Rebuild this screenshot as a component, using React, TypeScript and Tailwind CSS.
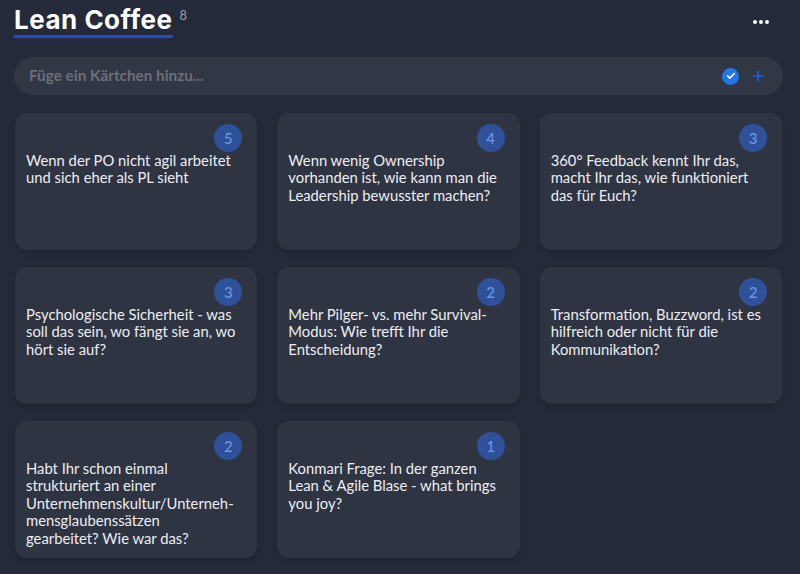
import { Check, Plus } from 'lucide-react'

interface CardItem {
  votes: number
  text: string
}

// line breaks are kept as in the picture
const cards: CardItem[] = [
  { votes: 5, text: 'Wenn der PO nicht agil arbeitet\nund sich eher als PL sieht' },
  { votes: 4, text: 'Wenn wenig Ownership\nvorhanden ist, wie kann man die\nLeadership bewusster machen?' },
  { votes: 3, text: '360° Feedback kennt Ihr das,\nmacht Ihr das, wie funktioniert\ndas für Euch?' },
  { votes: 3, text: 'Psychologische Sicherheit - was\nsoll das sein, wo fängt sie an, wo\nhört sie auf?' },
  { votes: 2, text: 'Mehr Pilger- vs. mehr Survival-\nModus: Wie trefft Ihr die\nEntscheidung?' },
  { votes: 2, text: 'Transformation, Buzzword, ist es\nhilfreich oder nicht für die\nKommunikation?' },
  {
    votes: 2,
    text: 'Habt Ihr schon einmal\nstrukturiert an einer\nUnternehmenskultur/Unterneh-\nmensglaubenssätzen\ngearbeitet? Wie war das?',
  },
  { votes: 1, text: 'Konmari Frage: In der ganzen\nLean & Agile Blase - what brings\nyou joy?' },
]

function Card({ votes, text }: CardItem) {
  return (
    <div className="flex h-[137px] flex-col rounded-xl bg-[#2f3442] pt-[11px] pr-[15px] pl-[11px] shadow-md shadow-black/10">
      <div className="flex justify-end">
        <span className="grid size-[28px] place-items-center rounded-full bg-[#2f5199] text-[15px] font-medium text-[#6b96e8]">
          {votes}
        </span>
      </div>
      <p className="text-[14.8px] leading-[17.4px] whitespace-pre-line text-[#eceef1]">{text}</p>
    </div>
  )
}

export default function App() {
  return (
    <div className="h-[574px] w-[800px] overflow-hidden bg-[#252a3a] pr-[18px] pl-[15px] font-['Lato',sans-serif]">
      <header className="flex h-[57px] items-start justify-between">
        <div className="-ml-px flex items-start">
          <h1 className="mt-[5px] border-b-[3px] border-[#1d4fc0] font-['Inter',sans-serif] text-[26px] leading-[30px] font-bold tracking-[0.5px] text-white">
            Lean Coffee
          </h1>
          <span className="mt-[7px] ml-[7px] text-[13px] leading-4 text-[#9a9ea8]">8</span>
        </div>
        <div className="mt-[20px] mr-[13px] flex gap-[2px]">
          <span className="size-[4px] rounded-full bg-white" />
          <span className="size-[4px] rounded-full bg-white" />
          <span className="size-[4px] rounded-full bg-white" />
        </div>
      </header>

      <div className="-mr-px -ml-px flex h-[38px] items-center rounded-full bg-[#323745] pr-[17px] pl-[15px]">
        <span className="-mt-[2px] flex-1 text-[15.3px] font-bold text-[#6b6f7a]">Füge ein Kärtchen hinzu...</span>
        <span className="grid size-[17px] place-items-center rounded-full bg-[#2176e8]">
          <Check className="size-[10px] text-white" strokeWidth={4} />
        </span>
        <Plus className="ml-[11px] size-[16px] text-[#1d5fe0]" strokeWidth={2.5} />
      </div>

      <div className="mt-[18px] grid grid-cols-3 gap-x-[20px] gap-y-[17px]">
        {cards.map((card, i) => (
          <Card key={i} {...card} />
        ))}
      </div>
    </div>
  )
}
